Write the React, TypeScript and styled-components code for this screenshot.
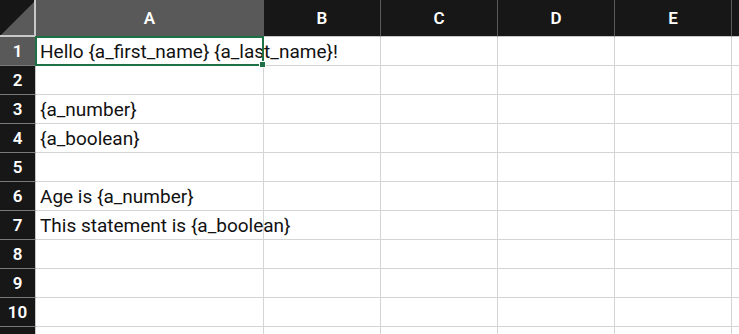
import React from 'react';
import styled, { createGlobalStyle } from 'styled-components';

const Global = createGlobalStyle`
  html, body { margin: 0; padding: 0; background: #ffffff; overflow: hidden; }
  body { font-family: Roboto, "Liberation Sans", sans-serif; }
`;

const columns = ['A', 'B', 'C', 'D', 'E', ''];
const widths = [228, 117, 117, 117, 117, 40];
const rows: string[] = [
  'Hello {a_first_name} {a_last_name}!',
  '',
  '{a_number}',
  '{a_boolean}',
  '',
  'Age is {a_number}',
  'This statement is {a_boolean}',
  '',
  '',
  '',
];

const Sheet = styled.div`
  display: grid;
  grid-template-columns: 36px ${widths.map((w) => `${w}px`).join(' ')};
  grid-template-rows: 37px repeat(${rows.length + 1}, 29px);
  width: 739px;
  height: 334px;
  overflow: hidden;
`;

const Corner = styled.div`
  position: relative;
  background: #161616;
  border-right: 2px solid #c8c8c8;
  border-bottom: 2px solid #c8c8c8;
  box-sizing: border-box;
  overflow: hidden;
`;

const ColHead = styled.div<{ $active?: boolean }>`
  display: flex;
  align-items: center;
  justify-content: center;
  background: ${(p) => (p.$active ? '#595959' : '#171717')};
  color: #ffffff;
  font-size: 17px;
  font-weight: 600;
  border-right: 1px solid #5a5a5a;
  border-bottom: 1px solid #c8c8c8;
  box-sizing: border-box;
`;

const RowHead = styled.div<{ $active?: boolean }>`
  display: flex;
  align-items: center;
  justify-content: center;
  background: ${(p) => (p.$active ? '#595959' : '#171717')};
  color: #ffffff;
  font-size: 17px;
  font-weight: 600;
  border-right: 1px solid #c8c8c8;
  border-bottom: 1px solid #7a7a7a;
  box-sizing: border-box;
`;

const Cell = styled.div<{ $selected?: boolean }>`
  position: relative;
  display: flex;
  align-items: center;
  padding-left: 4px;
  font-size: 19px;
  color: #111111;
  white-space: nowrap;
  border-right: 1px solid #d4d4d4;
  border-bottom: 1px solid #d4d4d4;
  box-sizing: border-box;
  overflow: visible;
  z-index: ${(p) => (p.$selected ? 2 : 1)};
`;

const Selection = styled.div`
  position: absolute;
  inset: -1px -1px -1px -1px;
  border: 2px solid #1e7145;
  pointer-events: none;
`;

const Handle = styled.div`
  position: absolute;
  right: -4px;
  bottom: -4px;
  width: 7px;
  height: 7px;
  background: #1e7145;
  border: 1px solid #ffffff;
  box-sizing: border-box;
`;

const App: React.FC = () => {
  // the last grid row is only partly in view, so it carries no label
  const allRows = [...rows, ''];
  return (
    <>
      <Global />
      <Sheet>
        <Corner>
          <svg width="36" height="37" style={{ position: 'absolute', left: 0, top: 0 }}>
            <polygon points="34,2 34,35 1,35" fill="#5a5a5a" />
          </svg>
        </Corner>
        {columns.map((c, i) => (
          <ColHead key={`h${i}`} $active={i === 0}>{c}</ColHead>
        ))}
        {allRows.map((text, r) => (
          <React.Fragment key={`r${r}`}>
            <RowHead $active={r === 0}>{r < rows.length ? r + 1 : ''}</RowHead>
            {columns.map((_, c) => (
              <Cell key={`c${r}-${c}`} $selected={r === 0 && c === 0}>
                {c === 0 ? text : ''}
                {r === 0 && c === 0 && (
                  <Selection>
                    <Handle />
                  </Selection>
                )}
              </Cell>
            ))}
          </React.Fragment>
        ))}
      </Sheet>
    </>
  );
};

export default App;
